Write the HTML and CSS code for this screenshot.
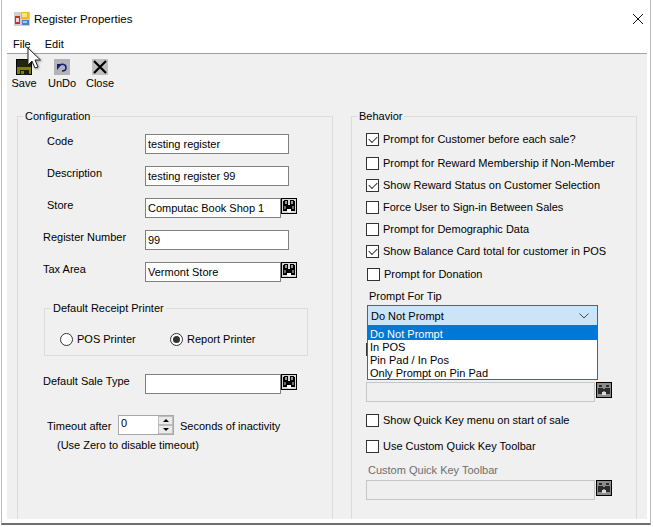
FILE: index.html
```html
<!DOCTYPE html>
<html lang="en">
<head>
<meta charset="utf-8">
<title>Register Properties</title>
<link rel="stylesheet" href="styles.css">
</head>
<body>
<svg class="sprite" width="0" height="0" aria-hidden="true">
  <symbol id="binoc" viewBox="0 0 16 16">
    <rect width="16" height="16" fill="#000"/>
    <rect x="1" y="1" width="14" height="14" fill="#d8d8d8"/>
    <path d="M3 2h4v5h2V2h4v1h1v10H9v-2H7v2H2V3h1z" fill="#000"/>
    <path d="M4 3h2v3H4zM10 3h2v3h-2z" fill="#9a9a9a"/>
    <path d="M3 8h2v3H3zM11 8h2v3h-2z" fill="#6a6a6a"/>
    <path d="M6 11h4v3H6z" fill="#fff"/>
  </symbol>
  <symbol id="binoc-off" viewBox="0 0 16 16">
    <rect width="16" height="16" fill="#000"/>
    <rect x="1" y="1" width="14" height="14" fill="#8c8c8c"/>
    <path d="M3 3h3v2H3zM10 3h3v2h-3zM2 6h5v6H2zM9 6h5v6H9zM7 7h2v2H7z" fill="#2c2c2c"/>
    <path d="M6 10h4v3H6z" fill="#dcdcdc"/>
  </symbol>
</svg>
<div class="window">
  <header class="titlebar">
    <svg class="app-icon" width="16" height="16" viewBox="0 0 16 16">
      <rect x="0" y="1" width="16" height="14" fill="#cfcfcf"/>
      <rect x="1" y="5" width="5" height="8" fill="#c8302a"/>
      <rect x="2" y="7" width="3" height="4" fill="#f4d8d0"/>
      <rect x="7" y="1" width="8" height="7" fill="#f2b820"/>
      <rect x="8" y="2" width="5" height="4" fill="#ffe27a"/>
      <rect x="8" y="9" width="7" height="5" fill="#4a80d0"/>
      <rect x="9" y="10" width="4" height="2" fill="#a8c8f0"/>
    </svg>
    <span class="title">Register Properties</span>
    <svg class="close-x" width="10" height="10" viewBox="0 0 10 10">
      <path d="M0 0L10 10M10 0L0 10" stroke="#111" stroke-width="1" fill="none"/>
    </svg>
  </header>
  <nav class="menubar">
    <span class="menu-item">File</span>
    <span class="menu-item">Edit</span>
  </nav>
  <main class="panel">
    <div class="toolbar">
      <div class="tool">
        <svg width="16" height="16" viewBox="0 0 16 16">
          <rect width="16" height="16" fill="#000"/>
          <rect x="1" y="1" width="14" height="7" fill="#23260e"/>
          <rect x="1" y="8" width="14" height="7" fill="#808000"/>
          <rect x="4" y="11" width="9" height="5" fill="#1a1a1a"/>
          <rect x="5" y="12" width="3" height="3" fill="#808000"/>
        </svg>
        <span>Save</span>
      </div>
      <div class="tool">
        <svg width="16" height="16" viewBox="0 0 16 16">
          <rect width="16" height="16" fill="#b4b4b8"/>
          <path d="M5 6.5c3-2 7-1.500 7 2s-2 3.500-4 3.500" fill="none" stroke="#10207a" stroke-width="1.600"/>
          <path d="M3 5h5l-5 6z" fill="#10207a"/>
        </svg>
        <span>UnDo</span>
      </div>
      <div class="tool">
        <svg width="16" height="16" viewBox="0 0 16 16">
          <rect width="16" height="16" fill="#c0c0c0"/>
          <path d="M2 2L14 14M14 2L2 14" stroke="#000" stroke-width="2.200" fill="none"/>
        </svg>
        <span>Close</span>
      </div>
    </div>
    <div class="groups">
      <fieldset class="group group-config">
        <legend>Configuration</legend>
        <div class="form-row">
          <span class="label">Code</span>
          <div class="field wide">testing register</div>
        </div>
        <div class="form-row">
          <span class="label">Description</span>
          <div class="field wide">testing register 99</div>
        </div>
        <div class="form-row">
          <span class="label">Store</span>
          <div class="field short">Computac Book Shop 1</div>
          <svg class="binoc" width="16" height="16"><use href="#binoc"/></svg>
        </div>
        <div class="form-row">
          <span class="label outdent">Register Number</span>
          <div class="field wide">99</div>
        </div>
        <div class="form-row">
          <span class="label outdent">Tax Area</span>
          <div class="field short">Vermont Store</div>
          <svg class="binoc" width="16" height="16"><use href="#binoc"/></svg>
        </div>
        <fieldset class="group-printer">
          <legend>Default Receipt Printer</legend>
          <div class="radios">
            <label class="radio"><span class="radio-dot"></span>POS Printer</label>
            <label class="radio"><span class="radio-dot on"></span>Report Printer</label>
          </div>
        </fieldset>
        <div class="form-row sale-type">
          <span class="label outdent">Default Sale Type</span>
          <div class="field short"></div>
          <svg class="binoc" width="16" height="16"><use href="#binoc"/></svg>
        </div>
        <div class="timeout-row">
          <span class="timeout-label">Timeout after</span>
          <div class="spinner">
            <span class="spin-value">0</span>
            <span class="spin-buttons">
              <span class="spin-btn"><i class="tri-up"></i></span>
              <span class="spin-btn"><i class="tri-down"></i></span>
            </span>
          </div>
          <span class="seconds">Seconds of inactivity</span>
        </div>
        <p class="hint">(Use Zero to disable timeout)</p>
      </fieldset>
      <fieldset class="group group-behavior">
        <legend>Behavior</legend>
        <div class="check first"><span class="box on"></span>Prompt for Customer before each sale?</div>
        <div class="check gap2"><span class="box"></span>Prompt for Reward Membership if Non-Member</div>
        <div class="check"><span class="box on"></span>Show Reward Status on Customer Selection</div>
        <div class="check"><span class="box"></span>Force User to Sign-in Between Sales</div>
        <div class="check"><span class="box"></span>Prompt for Demographic Data</div>
        <div class="check"><span class="box on"></span>Show Balance Card total for customer in POS</div>
        <div class="check donation"><span class="box"></span>Prompt for Donation</div>
        <div class="tip-label">Prompt For Tip</div>
        <div class="combo">
          <span>Do Not Prompt</span>
          <svg width="10" height="6" viewBox="0 0 10 6"><path d="M0.500 0.500L5 5L9.500 0.500" fill="none" stroke="#444" stroke-width="1"/></svg>
          <ul class="dropdown">
            <li class="selected">Do Not Prompt</li>
            <li>In POS</li>
            <li>Pin Pad / In Pos</li>
            <li>Only Prompt on Pin Pad</li>
          </ul>
        </div>
        <div class="check hidden-check"><span class="box"></span></div>
        <div class="lookup first-lookup">
          <div class="field off"></div>
          <svg class="binoc" width="16" height="16"><use href="#binoc-off"/></svg>
        </div>
        <div class="check quick"><span class="box"></span>Show Quick Key menu on start of sale</div>
        <div class="check custom"><span class="box"></span>Use Custom Quick Key Toolbar</div>
        <div class="muted-label">Custom Quick Key Toolbar</div>
        <div class="lookup">
          <div class="field off"></div>
          <svg class="binoc" width="16" height="16"><use href="#binoc-off"/></svg>
        </div>
      </fieldset>
    </div>
  </main>
</div>
<svg class="cursor" width="15" height="23" viewBox="0 0 15 23">
  <path d="M1 1V18L5 14L8 21L11 20L8 13H13.500Z" fill="#fff" stroke="#222" stroke-width="1"/>
</svg>
</body>
</html>
```
FILE: styles.css
```css
* { box-sizing: border-box; }
html, body { margin: 0; padding: 0; }
body {
  width: 653px;
  height: 527px;
  background: #fff;
  font-family: "Liberation Sans", Arial, sans-serif;
  font-size: 11px;
  color: #000;
  overflow: hidden;
  position: relative;
}
.sprite { position: absolute; }
.window {
  width: 650px;
  height: 525px;
  margin-left: 1px;
  padding: 0 3px 4px 5px;
  background: #fff;
  border-left: 1px solid #bdbdbd;
  border-right: 1px solid #b8b8b8;
  border-bottom: 2px solid #6e6e6e;
  display: flex;
  flex-direction: column;
}
.titlebar {
  height: 34px;
  display: flex;
  align-items: center;
  padding: 3px 4px 0 7px;
  flex: none;
}
.title { margin-left: 4px; font-size: 11.5px; }
.close-x { margin-left: auto; }
.menubar {
  height: 20px;
  flex: none;
  display: flex;
  align-items: center;
  padding: 0 0 0 6px;
  gap: 14px;
  border-bottom: 1px solid #a0a0a0;
}
.panel {
  flex: 1;
  background: #f0f0f0;
  display: flex;
  flex-direction: column;
  min-height: 0;
}
.toolbar {
  height: 56px;
  flex: none;
  display: flex;
  padding-top: 5px;
  margin-left: -2px;
}
.tool {
  width: 38px;
  display: flex;
  flex-direction: column;
  align-items: center;
}
.tool span { line-height: 14px; margin-top: 1px; }
.groups {
  flex: 1;
  display: flex;
  gap: 18px;
  padding: 0 9px 0 10px;
  min-height: 0;
}
fieldset { margin: 0; padding: 0; min-width: 0; }
legend {
  padding: 0 2px;
  line-height: 13px;
  height: 13px;
}
.group {
  border: 1px solid #dcdcdc;
  border-bottom: 0;
  height: 100%;
}
.group legend { margin-left: 5px; }
.group-config { width: 316px; padding-top: 11px; }
.group-behavior { width: 286px; padding-top: 5px; }

.form-row {
  display: flex;
  height: 20px;
  margin-bottom: 12px;
}
.label {
  width: 127px;
  padding-left: 29px;
  line-height: 14px;
}
.label.outdent { padding-left: 25px; }
.field {
  height: 20px;
  line-height: 19px;
  background: #fff;
  border: 1px solid #7f7f7f;
  padding-left: 2px;
  white-space: nowrap;
}
.field.wide { width: 144px; }
.field.short { width: 136px; }
.binoc { flex: none; }
.field.off {
  width: 229px;
  background: #efefef;
  border-color: #c6c6c6;
}
.group-printer {
  width: 264px;
  height: 54px;
  margin: 20px 0 0 26px;
  border: 1px solid #dcdcdc;
}
.group-printer legend { margin-left: 6px; }
.radios {
  display: flex;
  padding: 17px 0 0 15px;
}
.radio {
  display: flex;
  align-items: center;
  gap: 4px;
  height: 14px;
}
.radio:first-child { width: 110px; }
.radio-dot {
  width: 13px;
  height: 13px;
  border-radius: 50%;
  border: 1px solid #333;
  background: #fff;
  position: relative;
  display: flex;
  align-items: center;
  justify-content: center;
}
.radio-dot.on::after {
  content: "";
  width: 7px;
  height: 7px;
  border-radius: 50%;
  background: #333;
}
.sale-type { margin: 18px 0 0; }
.timeout-row {
  display: flex;
  align-items: center;
  height: 20px;
  margin-top: 21px;
}
.timeout-label {
  width: 100px;
  padding-left: 29px;
  padding-top: 2px;
}
.spinner {
  width: 56px;
  height: 20px;
  background: #fff;
  border: 1px solid #a8a8a8;
  display: flex;
  justify-content: space-between;
}
.spin-value { padding-left: 2px; line-height: 15px; }
.spin-buttons {
  width: 15px;
  display: flex;
  flex-direction: column;
}
.spin-btn {
  flex: 1;
  background: #eaeaea;
  border: 1px solid #bdbdbd;
  display: flex;
  align-items: center;
  justify-content: center;
}
.tri-up, .tri-down {
  width: 0;
  height: 0;
  border-left: 3px solid transparent;
  border-right: 3px solid transparent;
}
.tri-up { border-bottom: 3px solid #000; }
.tri-down { border-top: 3px solid #000; }
.seconds { margin-left: 6px; padding-top: 2px; white-space: nowrap; }
.hint {
  margin: 3px 0 0 39px;
  line-height: 14px;
}

.check {
  display: flex;
  align-items: center;
  gap: 4px;
  height: 22px;
  margin-left: 14px;
  white-space: nowrap;
}
.gap2 { margin-top: 2px; }
.donation { margin: 1px 0 0 15px; }
.box {
  width: 13px;
  height: 13px;
  flex: none;
  background: #fff;
  border: 1px solid #333;
  position: relative;
  display: block;
}
.box.on::after {
  content: "";
  position: absolute;
  left: 2px;
  top: 1px;
  width: 7px;
  height: 4px;
  margin-top: 1px;
  border-left: 1px solid #333;
  border-bottom: 1px solid #333;
  transform: rotate(-45deg);
}
.tip-label {
  margin: 4px 0 0 17px;
  line-height: 14px;
}
.combo {
  position: relative;
  width: 231px;
  height: 21px;
  margin: 2px 0 0 15px;
  padding: 0 8px 0 3px;
  background: #cce4f7;
  border: 1px solid #0078d7;
  display: flex;
  align-items: center;
  justify-content: space-between;
}
.dropdown {
  position: absolute;
  left: -1px;
  top: 20px;
  width: 231px;
  height: 54px;
  margin: 0;
  padding: 0;
  list-style: none;
  background: #fff;
  border: 1px solid #0078d7;
  z-index: 2;
}
.dropdown li {
  height: 13px;
  line-height: 13px;
  padding: 1px 0 0 2px;
}
.dropdown .selected { background: #0078d7; color: #fff; }
.hidden-check { margin-top: 12px; }
.lookup {
  display: flex;
  gap: 1px;
  margin-left: 14px;
}
.first-lookup { margin-top: 22px; }
.quick { margin-top: 7px; }
.custom { margin-top: 4px; }
.muted-label {
  margin: 6px 0 3px 16px;
  line-height: 14px;
  color: #6d6d6d;
}
.cursor {
  position: absolute;
  left: 27px;
  top: 47px;
  filter: drop-shadow(1px 1px 1px rgba(0,0,0,.35));
}
```
